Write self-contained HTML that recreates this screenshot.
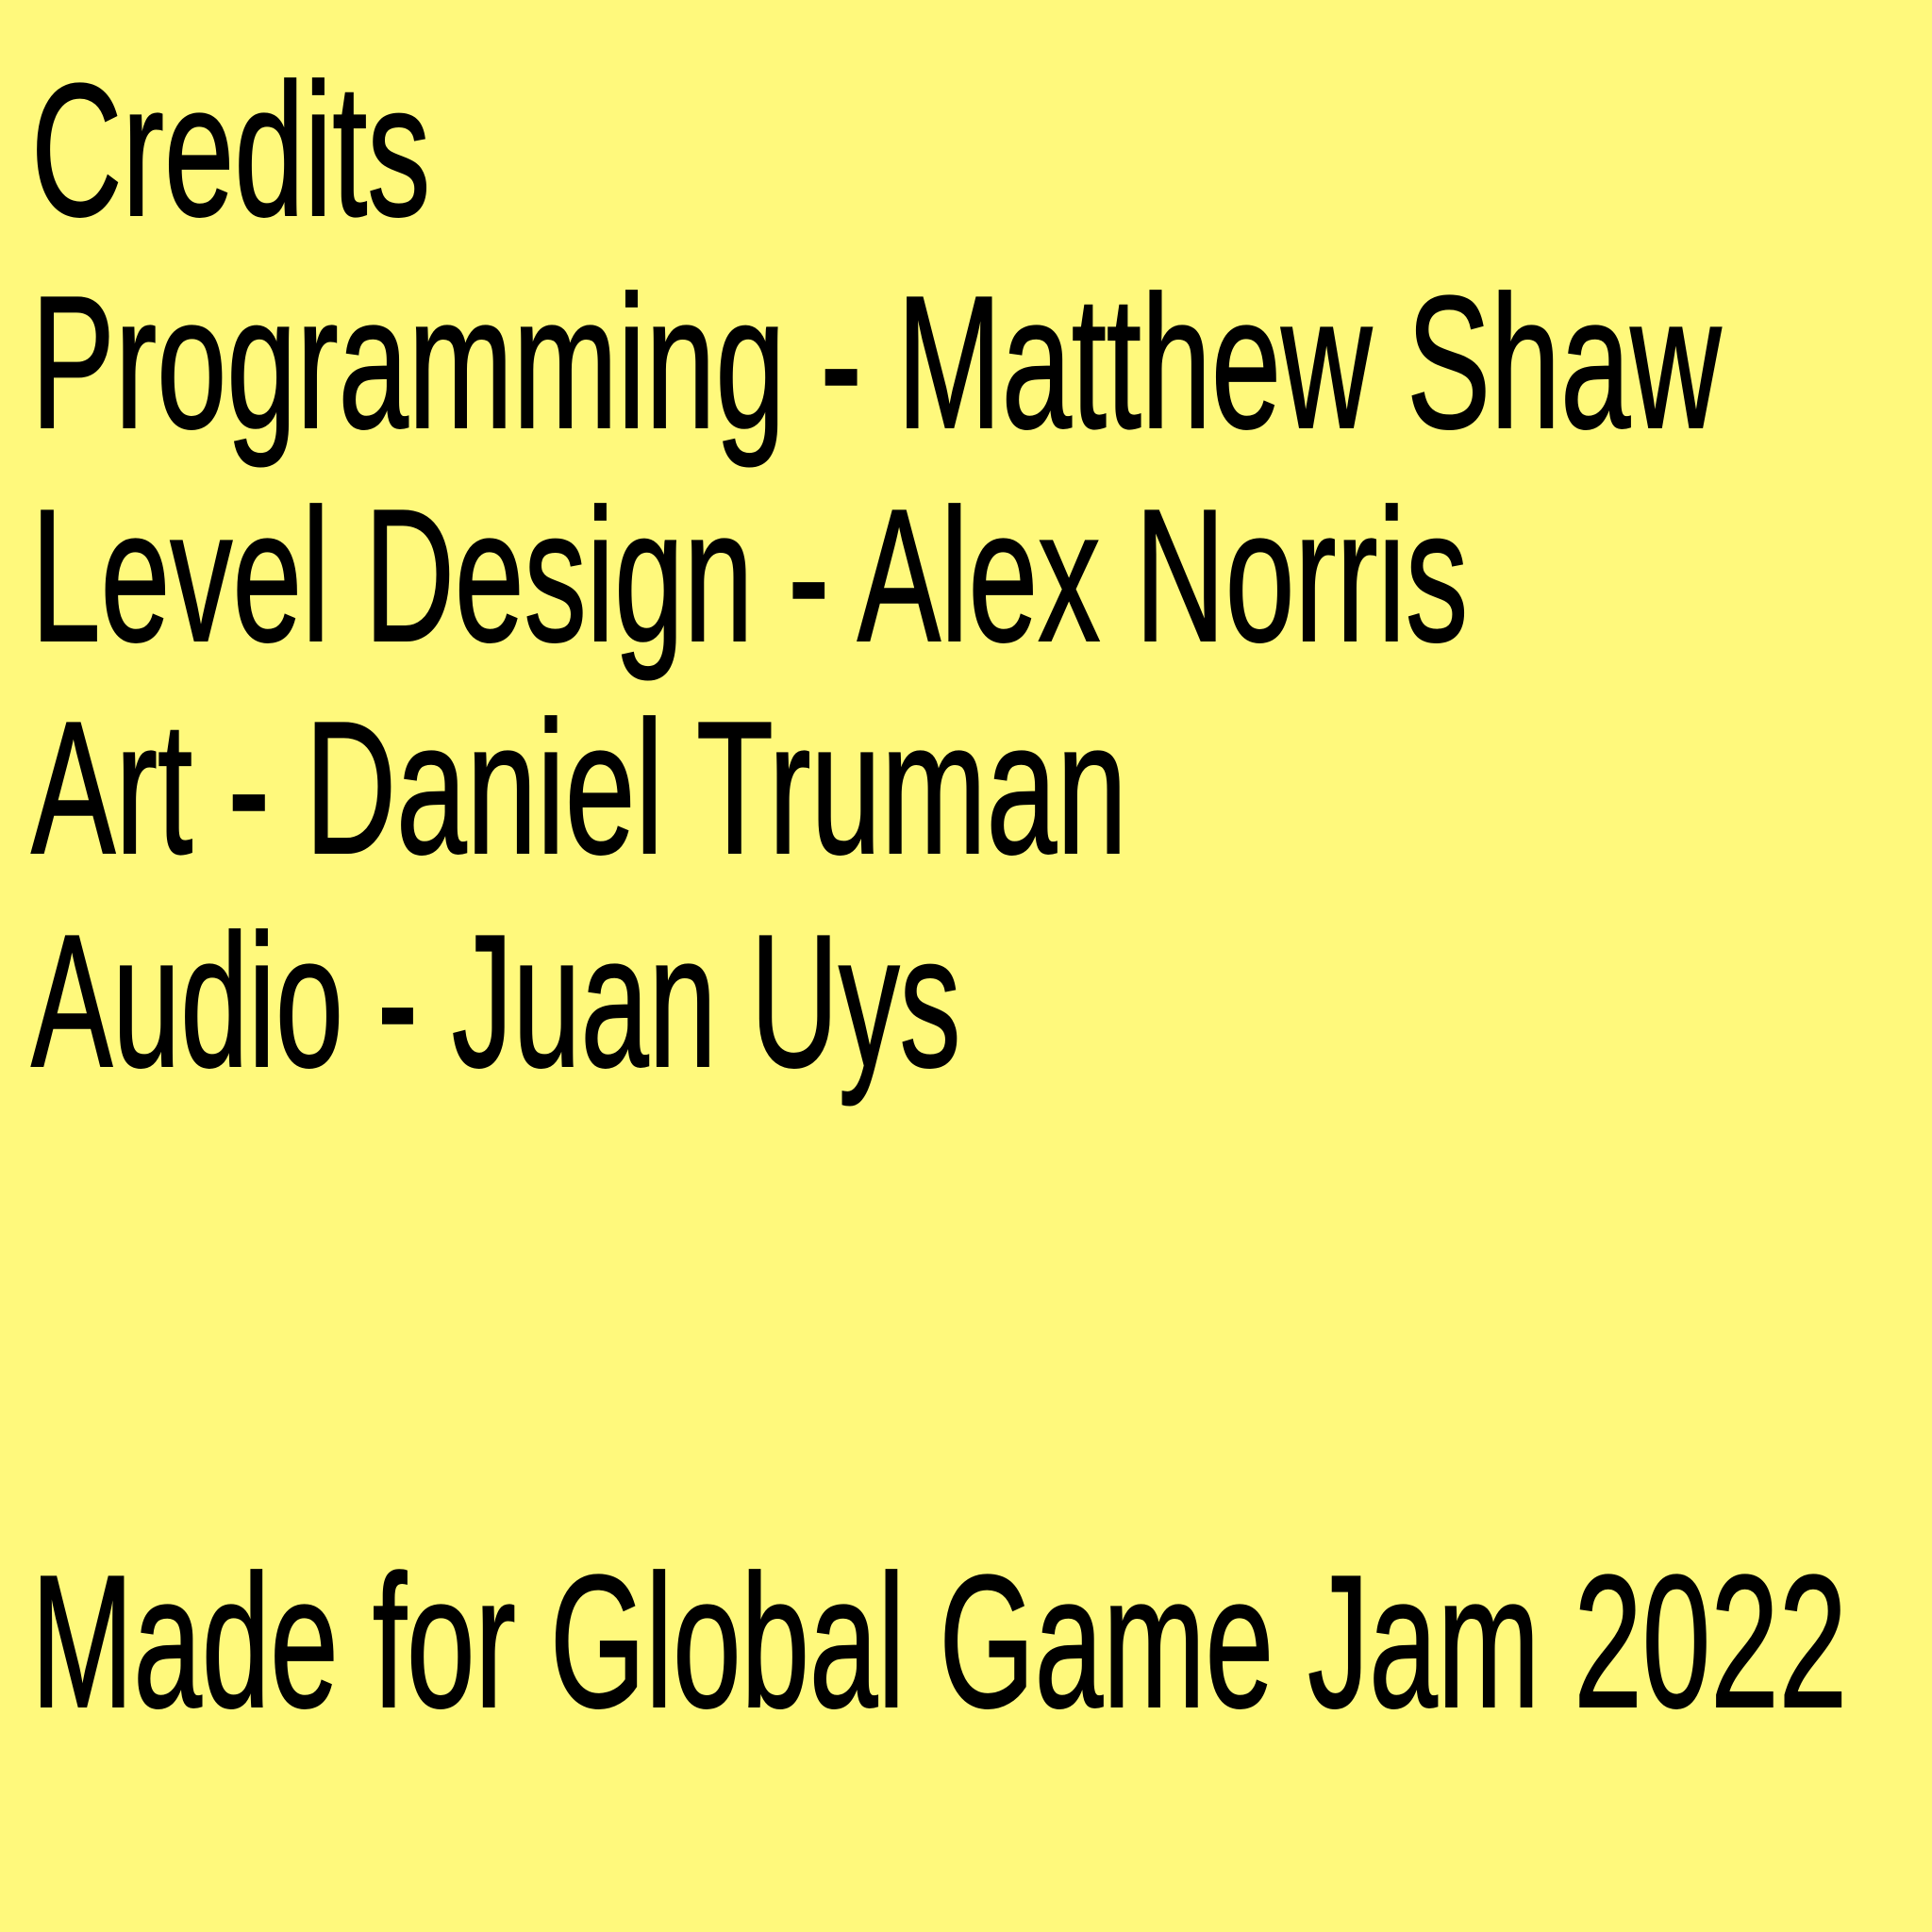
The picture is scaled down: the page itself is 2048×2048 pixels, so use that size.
<!DOCTYPE html>
<html><head><meta charset="utf-8"><style>
html,body{margin:0;padding:0;}
body{width:2048px;height:2048px;background:#fff97c;position:relative;overflow:hidden;}
.l{position:absolute;left:33px;font-family:"Liberation Sans",sans-serif;font-size:200px;line-height:200px;color:#000;white-space:nowrap;transform-origin:0 0;-webkit-text-stroke:2px #000;}
</style></head><body>
<div class="l" style="top:60px;transform:scaleX(0.668)">Credits</div>
<div class="l" style="top:285px;transform:scaleX(0.666)">Programming - Matthew Shaw</div>
<div class="l" style="top:511px;transform:scaleX(0.662)">Level Design - Alex Norris</div>
<div class="l" style="top:736px;transform:scaleX(0.67)">Art - Daniel Truman</div>
<div class="l" style="top:962px;transform:scaleX(0.647)">Audio - Juan Uys</div>
<div class="l" style="top:1641px;transform:scaleX(0.651)">Made for Global Game Jam 2022</div>
</body></html>
